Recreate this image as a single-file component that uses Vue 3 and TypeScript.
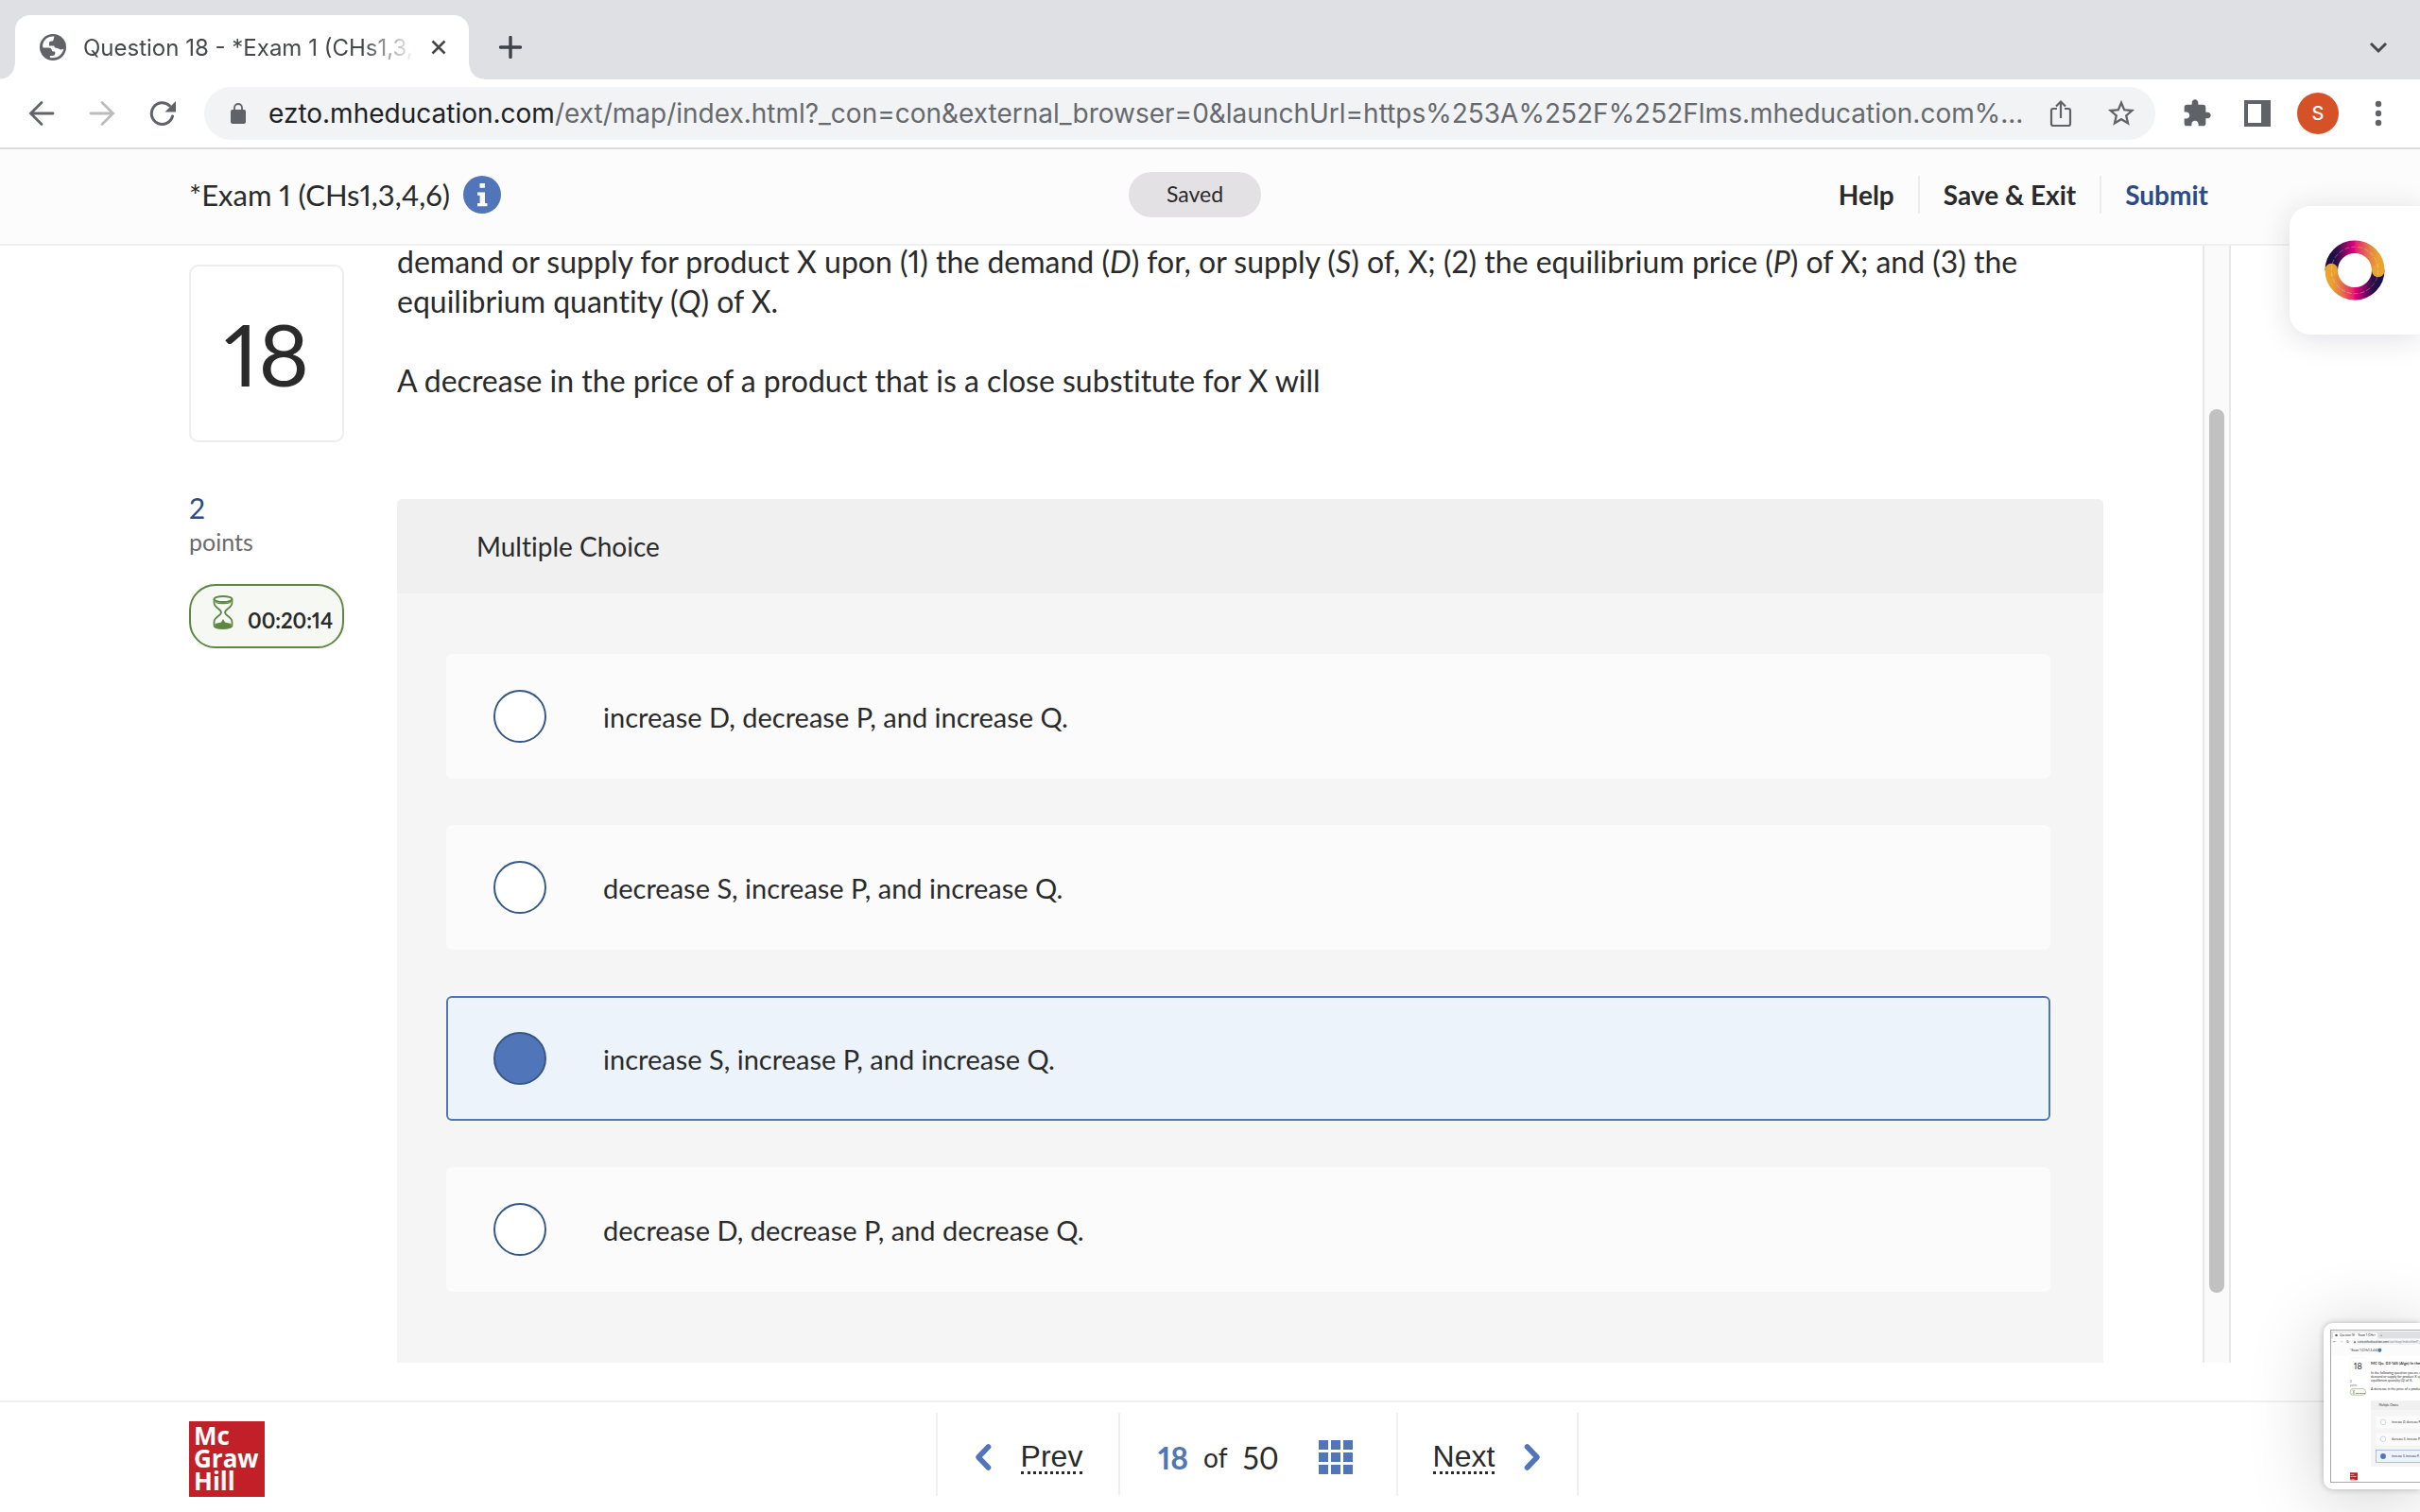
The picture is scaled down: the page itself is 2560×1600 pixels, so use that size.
<script setup lang="ts">
import { ref } from 'vue'

interface Choice {
  id: string
  text: string
}

const choices: Choice[] = [
  { id: 'a', text: 'increase D, decrease P, and increase Q.' },
  { id: 'b', text: 'decrease S, increase P, and increase Q.' },
  { id: 'c', text: 'increase S, increase P, and increase Q.' },
  { id: 'd', text: 'decrease D, decrease P, and decrease Q.' },
]
const selected = ref<string>('c')
const cells: number[] = [0, 1, 2, 3, 4, 5, 6, 7, 8]
</script>

<template>
  <div class="window">
    <div class="tabstrip">
      <div class="tab">
        <svg class="favicon" viewBox="0 0 28 28" aria-hidden="true">
          <circle cx="14" cy="14" r="14" fill="#5f6368" />
          <path d="M15.500 2.500C10 1.800 5 5 3.500 10c-.6 2-.4 3.600.2 4.500h6c2 0 2.800 1 3 2.500.2 1.600 1.800 1.600 3.600 1.600v2.200c0 1.200-1 2-2.600 2.100l-3 .1.300 1.900C17.500 26.800 24.500 22 25.300 15.500c-1 .9-2 1.200-3.300 1-1.800-.2-2.600-1.600-4.400-1.700-2-.1-2.300-1-2.100-2.300H10V9.800c0-1.500 1-2.200 2.600-2.200 1.500 0 2-.8 2-2.200z" fill="#fff" />
        </svg>
        <span class="tab-title">Question 18 - *Exam 1 (CHs1,3,4,6)</span>
        <button class="plain tab-close" aria-label="Close tab">
          <svg width="16" height="16" viewBox="0 0 16 16"><path d="M1.500 1.500l13 13M14.500 1.500l-13 13" stroke="#45474a" stroke-width="2.600" /></svg>
        </button>
      </div>
      <button class="plain new-tab" aria-label="New tab">
        <svg width="24" height="24" viewBox="0 0 24 24"><path d="M12 1.500v21M1.500 12h21" stroke="#3f4246" stroke-width="3.400" stroke-linecap="round" /></svg>
      </button>
      <button class="plain tab-search" aria-label="Search tabs">
        <svg width="20" height="13" viewBox="0 0 20 13"><path d="M2 2l8 8 8-8" fill="none" stroke="#45474a" stroke-width="3" /></svg>
      </button>
    </div>

    <div class="toolbar">
      <button class="plain slot" aria-label="Back">
        <svg width="28" height="28" viewBox="0 0 28 28"><path d="M26 14H3M14 2.500L2.500 14 14 25.500" fill="none" stroke="#5f6368" stroke-width="2.800" stroke-linecap="round" /></svg>
      </button>
      <button class="plain slot" aria-label="Forward">
        <svg width="28" height="28" viewBox="0 0 28 28"><path d="M2 14h23M14 2.500L25.500 14 14 25.500" fill="none" stroke="#babcbe" stroke-width="2.800" stroke-linecap="round" /></svg>
      </button>
      <button class="plain slot" aria-label="Reload">
        <svg width="28" height="28" viewBox="0 0 28 28"><path d="M24.500 17A11.300 11.300 0 1 1 21.500 6" fill="none" stroke="#5f6368" stroke-width="3" stroke-linecap="round" /><path d="M28 1v11.500H16.500z" fill="#5f6368" /></svg>
      </button>
      <div class="omnibox">
        <svg class="lock" width="16" height="22" viewBox="0 0 16 22" aria-hidden="true">
          <rect x="0" y="7" width="16" height="15" rx="2" fill="#5f6368" />
          <path d="M4 8V5a4 4 0 0 1 8 0v3" fill="none" stroke="#5f6368" stroke-width="1.800" />
        </svg>
        <div class="url"><span class="host">ezto.mheducation.com</span>/ext/map/index.html?_con=con&amp;external_browser=0&amp;launchUrl=https%253A%252F%252Flms.mheducation.com%...</div>
        <button class="plain slot" aria-label="Share">
          <svg width="24" height="30" viewBox="0 0 24 30" fill="none" stroke="#5f6368" stroke-width="2.200">
            <path d="M8 10H4a2 2 0 0 0-2 2v14a2 2 0 0 0 2 2h16a2 2 0 0 0 2-2V12a2 2 0 0 0-2-2h-4" />
            <path d="M12 20V2.500M7 7.500l5-5 5 5" />
          </svg>
        </button>
        <button class="plain slot" aria-label="Bookmark">
          <svg width="34" height="34" viewBox="0 0 24 24"><path fill="#5f6368" d="M22 9.240l-7.190-.62L12 2 9.190 8.630 2 9.240l5.460 4.730L5.820 21 12 17.270 18.180 21l-1.630-7.030L22 9.240zM12 15.400l-3.760 2.270 1-4.280-3.320-2.880 4.380-.38L12 6.100l1.710 4.040 4.380.38-3.320 2.880 1 4.280L12 15.400z" /></svg>
        </button>
      </div>
      <button class="plain slot" aria-label="Extensions">
        <svg width="32" height="32" viewBox="0 0 24 24"><path fill="#5f6368" d="M20.500 11H19V7c0-1.100-.9-2-2-2h-4V3.500C13 2.120 11.880 1 10.500 1S8 2.120 8 3.500V5H4c-1.100 0-1.990.9-1.990 2v3.800H3.500c1.490 0 2.700 1.210 2.700 2.700s-1.210 2.700-2.700 2.700H2V20c0 1.100.9 2 2 2h3.800v-1.500c0-1.490 1.210-2.700 2.700-2.700 1.490 0 2.700 1.210 2.700 2.700V22H17c1.100 0 2-.9 2-2v-4h1.500c1.380 0 2.500-1.120 2.500-2.500S21.880 11 20.500 11z" /></svg>
      </button>
      <button class="plain slot" aria-label="Side panel">
        <svg width="28" height="28" viewBox="0 0 28 28"><rect width="28" height="28" fill="#5f6368" /><rect x="4" y="4" width="14" height="20" fill="#fff" /></svg>
      </button>
      <button class="plain slot" aria-label="Profile"><span class="avatar">S</span></button>
      <button class="plain slot" aria-label="Menu">
        <svg width="8" height="28" viewBox="0 0 8 28" fill="#5f6368"><circle cx="4" cy="4" r="3.200" /><circle cx="4" cy="14" r="3.200" /><circle cx="4" cy="24" r="3.200" /></svg>
      </button>
    </div>

    <header class="header">
      <div class="exam">
        <h1>*Exam 1 (CHs1,3,4,6)</h1>
        <button class="plain" aria-label="Exam information">
          <svg width="40" height="40" viewBox="0 0 40 40"><circle cx="20" cy="20" r="20" fill="#5075b8" /><path d="M17.500 8h5.500v4.800h-5.500zM15 17.500h8V29h2.500v3.200H15V29h2.600v-8.200H15z" fill="#fff" /></svg>
        </button>
      </div>
      <span class="saved">Saved</span>
      <nav class="actions">
        <a href="#help">Help</a>
        <a href="#exit">Save &amp; Exit</a>
        <a href="#submit" class="submit">Submit</a>
      </nav>
    </header>

    <main class="main">
      <aside class="side">
        <div class="number">18</div>
        <div class="points">2</div>
        <div class="points-label">points</div>
        <div class="timer">
          <svg width="24" height="36" viewBox="0 0 24 36" fill="none" stroke="#5d8743" stroke-width="1.800" aria-hidden="true">
            <ellipse cx="12" cy="4" rx="9.500" ry="3" />
            <path d="M2.500 4v4c0 5 7.500 6.500 7.500 10S2.500 23 2.500 28v4c0 1.700 4.200 3 9.500 3s9.500-1.300 9.500-3v-4c0-5-7.500-6.500-7.500-10s7.500-5 7.500-10V4" />
            <path d="M4 7.500c4 1.600 12 1.600 16 0" stroke-width="1.200" />
            <path d="M12 25l2 3.500 6.500 1.500v2.500c0 1.300-4 2.200-8.500 2.200s-8.500-.9-8.500-2.200V30l6.500-1.500z" fill="#5d8743" stroke="none" />
          </svg>
          <span>00:20:14</span>
        </div>
      </aside>

      <section class="question">
        <p>demand or supply for product X upon (1) the demand (<i>D</i>) for, or supply (<i>S</i>) of, X; (2) the equilibrium price (<i>P</i>) of X; and (3) the<br>equilibrium quantity (<i>Q</i>) of X.</p>
        <p>A decrease in the price of a product that is a close substitute for X will</p>
        <div class="card">
          <h2>Multiple Choice</h2>
          <div class="choices" role="radiogroup" aria-label="Multiple Choice">
            <label v-for="c in choices" :key="c.id" class="choice" :class="{ on: selected === c.id }">
              <input v-model="selected" type="radio" name="answer" :value="c.id">
              <span>{{ c.text }}</span>
            </label>
          </div>
        </div>
      </section>

      <div class="track" aria-hidden="true"><div class="thumb"></div></div>
    </main>

    <footer class="footer">
      <div class="logo">Mc<br>Graw<br>Hill</div>
      <nav class="pager">
        <button class="plain cell prev">
          <svg width="20" height="30" viewBox="0 0 20 30"><path d="M15.500 4L5 15l10.500 11" fill="none" stroke="#5075b8" stroke-width="5.600" stroke-linecap="round" stroke-linejoin="round" /></svg>
          <span>Prev</span>
        </button>
        <div class="cell count">
          <b>18</b><span>of</span><em>50</em>
          <button class="plain grid" aria-label="All questions"><i v-for="n in cells" :key="n"></i></button>
        </div>
        <button class="plain cell next">
          <span>Next</span>
          <svg width="20" height="30" viewBox="0 0 20 30"><path d="M4.500 4L15 15 4.500 26" fill="none" stroke="#5075b8" stroke-width="5.600" stroke-linecap="round" stroke-linejoin="round" /></svg>
        </button>
      </nav>
    </footer>

    <!-- Side widget docked on the right edge -->
    <button class="plain widget" aria-label="Assistant">
      <svg width="64" height="64" viewBox="0 0 64 64" fill="none" stroke-width="13.500">
        <defs>
          <linearGradient id="ringTop" gradientUnits="userSpaceOnUse" x1="7" y1="0" x2="57" y2="0">
            <stop offset="0" stop-color="#1d0e45" /><stop offset=".12" stop-color="#2c0f4b" /><stop offset=".49" stop-color="#e5007d" /><stop offset=".53" stop-color="#e3266f" /><stop offset=".85" stop-color="#e5873f" /><stop offset="1" stop-color="#e9a32f" />
          </linearGradient>
          <linearGradient id="ringBottom" gradientUnits="userSpaceOnUse" x1="57" y1="0" x2="7" y2="0">
            <stop offset="0" stop-color="#1d0e45" /><stop offset=".12" stop-color="#2c0f4b" /><stop offset=".49" stop-color="#e5007d" /><stop offset=".53" stop-color="#e3266f" /><stop offset=".85" stop-color="#e5873f" /><stop offset="1" stop-color="#e9a32f" />
          </linearGradient>
        </defs>
        <path d="M7.250 32a24.750 24.750 0 0 1 49.500 0" stroke="url(#ringTop)" />
        <path d="M56.750 32a24.750 24.750 0 0 1-49.500 0" stroke="url(#ringBottom)" />
        <circle cx="56.750" cy="32.500" r="6.750" fill="#e9a32f" stroke="none" />
        <circle cx="7.250" cy="31.500" r="6.750" fill="#e9a32f" stroke="none" />
        <circle cx="32" cy="32" r="24.750" stroke="#fff" stroke-opacity=".4" stroke-width=".7" stroke-dasharray="5 2" />
      </svg>
    </button>

    <!-- Floating capture preview -->
    <div class="preview" aria-hidden="true">
      <svg viewBox="0 0 94 160" width="94" height="160" font-family="Lato, sans-serif" fill="#2a2a2a">
        <rect width="94" height="160" fill="#fff" />
        <rect y="1" width="94" height="7.500" fill="#dee0e4" />
        <path d="M2 8.500V3.500a1.500 1.500 0 0 1 1.500-1.500h44a1.500 1.500 0 0 1 1.500 1.500v5z" fill="#fff" />
        <circle cx="5.500" cy="5" r="1.300" fill="#5f6368" />
        <text x="9" y="6" font-size="3">Question 18 - *Exam 1 (CHs</text>
        <text x="45" y="6" font-size="3.500">×</text><text x="52" y="6" font-size="3.500">+</text>
        <text x="2" y="13" font-size="3.500">←</text><text x="9" y="13" font-size="3.500" fill="#aaa">→</text><text x="15.500" y="13" font-size="3.500">↻</text>
        <rect x="21.500" y="9.500" width="80" height="5.500" rx="2.700" fill="#f1f3f4" />
        <circle cx="25" cy="12.300" r="1" fill="#5f6368" />
        <text x="28" y="13.400" font-size="3.300">ezto.mheducation.com<tspan fill="#777">/ext/map/index.html?_con</tspan></text>
        <rect y="15.800" width="94" height="10.800" fill="#fbfbfb" />
        <text x="20" y="22" font-size="3.300">*Exam 1 (CHs1,3,4,6)</text>
        <circle cx="51.300" cy="20.800" r="2.100" fill="#5075b8" />
        <rect x="20" y="28.700" width="16.500" height="18.500" rx="1" fill="#fff" stroke="#eee" stroke-width=".5" />
        <text x="28.300" y="41" font-size="9" text-anchor="middle">18</text>
        <text x="42" y="35.500" font-size="4.200" font-weight="700">MC Qu. 03-145 (Algo) In the fo</text>
        <text x="42" y="45.600" font-size="3.500">In the following question you are asked</text>
        <text x="42" y="49.900" font-size="3.500">demand or supply for product X upon</text>
        <text x="42" y="54.200" font-size="3.500">equilibrium quantity (<tspan font-style="italic">Q</tspan>) of X.</text>
        <text x="42" y="62.600" font-size="3.500">A decrease in the price of a product</text>
        <text x="20" y="55" font-size="3" fill="#2c4a86">2</text>
        <text x="20" y="58.600" font-size="2.700" fill="#777">points</text>
        <rect x="20.200" y="61.500" width="16.300" height="6.800" rx="3" fill="#f6f9f3" stroke="#5d8743" stroke-width=".4" />
        <path d="M22.600 63h2l-1.500 4h2zM25 63l-2 4" stroke="#5d8743" stroke-width=".3" fill="none" />
        <text x="26" y="66.500" font-size="2.300" font-weight="700">00:20:30</text>
        <rect x="42" y="74.300" width="52" height="69.700" fill="#f5f5f5" />
        <rect x="42" y="74.300" width="52" height="9.700" fill="#f0f0f0" />
        <text x="50.500" y="79.800" font-size="3">Multiple Choice</text>
        <rect x="47.300" y="90.500" width="47" height="13" fill="#fbfbfb" />
        <rect x="47.300" y="108.500" width="47" height="13" fill="#fbfbfb" />
        <rect x="47.500" y="126.500" width="50" height="13" fill="#ecf3fb" stroke="#5075b8" stroke-width=".4" />
        <circle cx="55" cy="96.800" r="2.800" fill="#fff" stroke="#7f99c6" stroke-width=".4" />
        <circle cx="55" cy="114.800" r="2.800" fill="#fff" stroke="#7f99c6" stroke-width=".4" />
        <circle cx="55" cy="133" r="2.900" fill="#5075b8" />
        <text x="64" y="98" font-size="3.100">increase D, decrease P, and</text>
        <text x="64" y="116" font-size="3.100">decrease S, increase P, and</text>
        <text x="64" y="134.200" font-size="3.100">increase S, increase P, and</text>
        <rect x="20" y="150.300" width="8" height="8" fill="#c22029" />
        <text font-size="2.500" font-weight="700" fill="#fff"><tspan x="20.600" y="152.800">Mc</tspan><tspan x="20.600" y="155.200">Graw</tspan><tspan x="20.600" y="157.600">Hill</tspan></text>
      </svg>
    </div>
  </div>
</template>

<style>
body {
  margin: 0;
  overflow: hidden;
}
</style>

<style scoped>
.window {
  position: relative;
  display: flex;
  flex-direction: column;
  height: 100vh;
  overflow: hidden;
  background: #fff;
  color: #2a2a2a;
  font-family: Lato, "Open Sans", sans-serif;
  font-variant-ligatures: no-common-ligatures;
  font-variant-numeric: proportional-nums;
}
.window *,
.window *::before,
.window *::after {
  box-sizing: border-box;
}
.plain {
  display: flex;
  align-items: center;
  justify-content: center;
  padding: 0;
  border: 0;
  background: none;
  color: inherit;
  font: inherit;
  cursor: pointer;
}
svg {
  display: block;
  flex: none;
}

.tabstrip {
  display: flex;
  flex: none;
  align-items: flex-end;
  height: 84px;
  padding: 0 34px 0 16px;
  background: #dee0e4;
  font-family: Inter, sans-serif;
}
.tab {
  position: relative;
  display: flex;
  align-items: center;
  width: 480px;
  height: 68px;
  padding: 0 24px 0 26px;
  border-radius: 16px 16px 0 0;
  background: #fff;
}
.tab::before,
.tab::after {
  content: "";
  position: absolute;
  bottom: 0;
  width: 16px;
  height: 16px;
}
.tab::before {
  right: 100%;
  background: radial-gradient(circle at 0 0, transparent 15px, #fff 16px);
}
.tab::after {
  left: 100%;
  background: radial-gradient(circle at 100% 0, transparent 15px, #fff 16px);
}
.favicon {
  width: 28px;
  height: 28px;
  margin-right: 18px;
}
.tab-title {
  flex: 1;
  overflow: hidden;
  white-space: nowrap;
  color: #45474a;
  font-size: 24px;
  -webkit-mask-image: linear-gradient(90deg, #000 84%, transparent);
  mask-image: linear-gradient(90deg, #000 84%, transparent);
}
.tab-close {
  margin-left: 16px;
}
.new-tab {
  width: 56px;
  height: 68px;
  margin-left: 16px;
}
.tab-search {
  height: 68px;
  margin-left: auto;
}

.toolbar {
  display: flex;
  flex: none;
  align-items: center;
  height: 74px;
  padding: 0 12px;
  border-bottom: 2px solid #d9dadb;
  font-family: Inter, sans-serif;
}
.slot {
  flex: none;
  width: 64px;
  height: 56px;
}
.omnibox {
  display: flex;
  flex: 1;
  align-items: center;
  min-width: 0;
  height: 56px;
  margin: 0 12px;
  padding: 0 4px 0 28px;
  border-radius: 28px;
  background: #f1f3f4;
}
.url {
  flex: 1;
  overflow: hidden;
  margin-left: 24px;
  white-space: nowrap;
  color: #66696d;
  font-size: 28px;
}
.host {
  color: #202124;
}
.avatar {
  width: 44px;
  height: 44px;
  border-radius: 50%;
  background: #d65127;
  color: #fff;
  font-size: 20px;
  font-weight: 500;
  line-height: 44px;
  text-align: center;
}

.header {
  display: grid;
  flex: none;
  grid-template-columns: 1fr auto 1fr;
  align-items: center;
  height: 102px;
  padding: 0 232px 4px 200px;
  border-bottom: 2px solid #f0f0f0;
  background: #fcfcfc;
}
.exam {
  display: flex;
  align-items: center;
  gap: 14px;
}
h1 {
  margin: 0;
  font-size: 31px;
  font-weight: 400;
}
.saved {
  height: 48px;
  padding: 0 40px;
  border-radius: 24px;
  background: #e3e1e4;
  font-size: 23px;
  line-height: 46px;
}
.actions {
  display: flex;
  justify-content: flex-end;
  margin-right: -8px;
}
.actions a {
  padding: 0 0 0 25px;
  color: #2a2a2a;
  font-size: 28px;
  font-weight: 700;
  line-height: 40px;
  text-decoration: none;
}
.actions a + a {
  margin-left: 25px;
  border-left: 2px solid #ececec;
}
.actions .submit {
  color: #2c4a86;
}

.main {
  display: flex;
  flex: 1;
  min-height: 0;
  margin: 0 200px 40px;
}
.side {
  flex: none;
  width: 164px;
  padding-top: 20px;
}
.number {
  height: 188px;
  margin-bottom: 50px;
  border: 2px solid #ededed;
  border-radius: 10px;
  font-size: 92px;
  line-height: 184px;
  text-align: center;
}
.points {
  color: #2c4a86;
  font-size: 30px;
  line-height: 38px;
}
.points-label {
  color: #6a6a6a;
  font-size: 25px;
  line-height: 34px;
}
.timer {
  display: flex;
  align-items: center;
  gap: 14px;
  height: 68px;
  margin-top: 28px;
  padding: 0 10px 0 22px;
  border: 2px solid #5d8743;
  border-radius: 28px;
  background: #f6f9f3;
  font-size: 22px;
  font-weight: 700;
}
.timer svg {
  margin-bottom: 8px;
}
.timer span {
  padding-top: 8px;
}
.question {
  display: flex;
  flex: 1;
  flex-direction: column;
  min-width: 0;
  margin: -4px 105px 0 56px;
}
.question p {
  margin: 0 0 42px;
  font-size: 32px;
  line-height: 42px;
}
.card {
  flex: 1;
  margin-top: 62px;
  border-radius: 6px 6px 0 0;
  background: #f5f5f5;
}
h2 {
  margin: 0;
  padding-left: 84px;
  border-radius: 6px 6px 0 0;
  background: #f0f0f0;
  font-size: 28px;
  font-weight: 400;
  line-height: 100px;
}
.choices {
  display: flex;
  flex-direction: column;
  gap: 49px;
  padding: 64px 56px 0 52px;
}
.choice {
  display: flex;
  align-items: center;
  height: 132px;
  padding-left: 48px;
  border: 2px solid #fbfbfb;
  border-radius: 6px;
  background: #fbfbfb;
  font-size: 29px;
}
.choice.on {
  border-color: #5075b8;
  background: #ecf3fb;
}
.choice input {
  appearance: none;
  flex: none;
  width: 56px;
  height: 56px;
  margin: 0 60px 0 0;
  border: 2px solid #365789;
  border-radius: 50%;
  background: #fff;
}
.choice input:checked {
  background: #5075b8;
}
.track {
  display: flex;
  flex: none;
  flex-direction: column;
  align-items: center;
  width: 30px;
  border: solid #e8e8e8;
  border-width: 0 2px;
  background: #fafafa;
}
.track::before {
  content: "";
  flex: 173;
}
.track::after {
  content: "";
  flex: 74;
}
.thumb {
  flex: 935;
  width: 16px;
  border-radius: 8px;
  background: #c1c1c1;
}

.footer {
  display: flex;
  flex: none;
  align-items: center;
  height: 118px;
  padding: 0 180px 0 200px;
  border-top: 2px solid #f0f0f0;
}
.logo {
  width: 80px;
  height: 80px;
  margin-top: 4px;
  padding: 3px 5px;
  background: #c22029;
  color: #fff;
  font-family: "Open Sans", sans-serif;
  font-size: 26px;
  font-weight: 700;
  line-height: 24px;
}
.pager {
  display: flex;
  margin: -6px auto 0;
}
.cell {
  display: flex;
  align-items: center;
  justify-content: center;
  height: 88px;
  padding-top: 6px;
  border-left: 2px solid #f0f0f0;
}
.cell:last-child {
  border-right: 2px solid #f0f0f0;
}
.prev,
.next {
  gap: 30px;
  width: 193px;
  font-family: "Liberation Sans", sans-serif;
  font-size: 32px;
}
.prev span,
.next span {
  border-bottom: 3px dotted #2a2a2a;
  line-height: 32px;
}
.count {
  justify-content: flex-start;
  width: 294px;
  padding-left: 40px;
  font-size: 32px;
}
.count b {
  color: #5075b8;
}
.count span {
  margin: 0 16px;
  font-size: 28px;
}
.count em {
  font-style: normal;
}
.grid {
  display: grid;
  grid-template-columns: repeat(3, 10px);
  gap: 3px;
  margin-left: 42px;
}
.grid i {
  width: 10px;
  height: 10px;
  background: #5075b8;
}

.widget {
  position: absolute;
  top: 218px;
  right: 0;
  width: 138px;
  height: 136px;
  border-radius: 22px 0 0 22px;
  background: #fff;
  box-shadow: 0 4px 32px rgba(30, 30, 60, 0.14);
}
.preview {
  position: absolute;
  right: 0;
  bottom: 24px;
  padding: 8px 0 8px 8px;
  border-radius: 10px 0 0 10px;
  background: #fff;
  box-shadow: 0 0 6px rgba(0, 0, 0, 0.25), 0 8px 80px rgba(0, 0, 0, 0.2);
}
.preview svg {
  outline: 1px solid #a8a8a8;
}
</style>
